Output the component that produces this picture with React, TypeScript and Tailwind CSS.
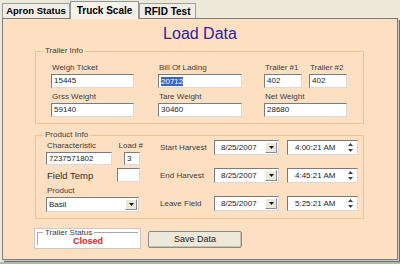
const Tab = ({ label, active, w, size }: { label: string; active?: boolean; w: string; size: string }) => (
  <div
    className={
      active
        ? `${w} ${size} h-[18px] flex items-center justify-center border border-b-0 border-[#8f9698] bg-[#f4f2ea] font-bold text-black z-10 -mb-px`
        : `${w} ${size} h-[15px] flex items-center justify-center border border-b-0 border-[#9aa0a2] bg-[#efede4] font-bold text-black`
    }
  >
    {label}
  </div>
);

const Label = ({ text, className = "" }: { text: string; className?: string }) => (
  <div className={`text-[8px] leading-[10px] text-[#3c3c3c] ${className}`}>{text}</div>
);

const Box = ({
  value,
  w,
  h = "h-[14px]",
  selected,
}: {
  value: string;
  w: string;
  h?: string;
  selected?: boolean;
}) => (
  <div
    className={`${w} ${h} bg-white border border-t-[#7b7b7b] border-l-[#7b7b7b] border-r-[#d9d9d9] border-b-[#d9d9d9] flex items-center pl-[2px] text-[8px] text-[#222]`}
  >
    {selected ? <span className="bg-[#3a66c4] text-white leading-[9px]">{value}</span> : value}
  </div>
);

const DropBtn = () => (
  <div className="w-[12px] h-[11px] mr-[1px] bg-[#ebe8dc] border border-t-white border-l-white border-r-[#8a8a8a] border-b-[#8a8a8a] flex items-center justify-center">
    <svg width="5" height="3" viewBox="0 0 5 3">
      <path d="M0 0h5L2.5 3z" fill="#111" />
    </svg>
  </div>
);

const Spin = () => (
  <div className="w-[12px] h-[13px] mr-[1px] flex flex-col justify-center items-center gap-[3px]">
    <svg width="5" height="3" viewBox="0 0 5 3">
      <path d="M0 3h5L2.5 0z" fill="#444" />
    </svg>
    <svg width="5" height="3" viewBox="0 0 5 3">
      <path d="M0 0h5L2.5 3z" fill="#444" />
    </svg>
  </div>
);

const Picker = ({ date, time }: { date: string; time: string }) => (
  <div className="flex gap-[8px]">
    <div className="w-[65px] h-[15px] bg-white border border-t-[#7b7b7b] border-l-[#7b7b7b] border-r-[#d9d9d9] border-b-[#d9d9d9] flex items-center justify-between text-[8px] text-[#222]">
      <span className="pl-[6px]">{date}</span>
      <DropBtn />
    </div>
    <div className="w-[71px] h-[15px] bg-white border border-t-[#7b7b7b] border-l-[#7b7b7b] border-r-[#d9d9d9] border-b-[#d9d9d9] flex items-center justify-between text-[8px] text-[#222]">
      <span className="pl-[7px]">{time}</span>
      <Spin />
    </div>
  </div>
);

const HarvestRow = ({ label, date, time }: { label: string; date: string; time: string }) => (
  <div className="flex items-center h-[15px]">
    <div className="w-[54px] text-[8px] text-[#3c3c3c]">{label}</div>
    <Picker date={date} time={time} />
  </div>
);

export default function App() {
  return (
    <div
      className="w-[400px] h-[264px] bg-[#ece9d8] overflow-hidden"
      style={{ fontFamily: '"Liberation Sans", Arial, sans-serif' }}
    >
      {/* Tabs */}
      <div className="h-[18px] flex items-end pl-[2px]">
        <Tab label="Apron Status" w="w-[68px]" size="text-[9.5px]" />
        <Tab label="Truck Scale" w="w-[69px]" size="text-[10px]" active />
        <Tab label="RFID Test" w="w-[57px]" size="text-[10px]" />
      </div>

      {/* Panel */}
      <div className="mx-[2px] h-[242px] bg-[#fde0c2] border border-[#7d7d7d] shadow-[1px_1px_0_#c8c8c8,2px_2px_0_#6e6e6e]">
        <div className="mt-[5px] text-center text-[16px] leading-[20px] text-[#2a22a8]">Load Data</div>

        <div className="pl-[32px]">
          {/* Trailer Info */}
          <fieldset className="mt-[2px] w-[329px] h-[78px] border border-[#efc48e]">
            <legend className="ml-[7px] px-[2px] text-[8px] leading-[10px] text-[#3c3c3c]">Trailer Info</legend>
            <div className="pl-[15px] pt-[7px] flex">
              <div className="flex flex-col gap-[1px] w-[83px]">
                <Label text="Weigh Ticket" className="ml-[1px]" />
                <Box value="15445" w="w-[83px]" />
                <Label text="Grss Weight" className="ml-[1px] mt-[3px]" />
                <Box value="59140" w="w-[83px]" />
              </div>
              <div className="flex flex-col gap-[1px] w-[84px] ml-[24px]">
                <Label text="Bill Of Lading" className="ml-[1px]" />
                <Box value="20712" w="w-[84px]" selected />
                <Label text="Tare Weight" className="ml-[1px] mt-[3px]" />
                <Box value="30460" w="w-[84px]" />
              </div>
              <div className="flex flex-col gap-[1px] ml-[22px]">
                <div className="flex gap-[7px]">
                  <div className="flex flex-col gap-[1px]">
                    <Label text="Trailer #1" className="ml-[1px]" />
                    <Box value="402" w="w-[38px]" />
                  </div>
                  <div className="flex flex-col gap-[1px]">
                    <Label text="Trailer #2" className="ml-[1px]" />
                    <Box value="402" w="w-[38px]" />
                  </div>
                </div>
                <Label text="Net Weight" className="ml-[1px] mt-[3px]" />
                <Box value="28680" w="w-[83px]" />
              </div>
            </div>
          </fieldset>

          {/* Product Info */}
          <fieldset className="mt-[6px] w-[329px] h-[89px] border border-[#efc48e]">
            <legend className="ml-[7px] px-[2px] text-[8px] leading-[10px] text-[#3c3c3c]">Product Info</legend>
            <div className="flex pl-[10px]">
              <div className="w-[94px] flex flex-col pt-[1px]">
                <div className="flex justify-between">
                  <div className="flex flex-col gap-[1px]">
                    <Label text="Characteristic" className="ml-[1px]" />
                    <Box value="7237571802" w="w-[66px]" h="h-[13px]" />
                  </div>
                  <div className="flex flex-col gap-[1px] items-end">
                    <Label text="Load #" className="mr-[-3px]" />
                    <Box value="3" w="w-[16px]" h="h-[13px]" />
                  </div>
                </div>
                <div className="flex justify-between items-center mt-[3px]">
                  <div className="text-[9.5px] leading-[13px] text-[#2c2c2c] ml-[1px] mt-[1px]">Field Temp</div>
                  <Box value="" w="w-[23px]" h="h-[14px]" />
                </div>
                <Label text="Product" className="ml-[1px] mt-[4px]" />
                <div className="mt-[1px] w-[93px] h-[15px] bg-white border border-t-[#7b7b7b] border-l-[#7b7b7b] border-r-[#d9d9d9] border-b-[#d9d9d9] flex items-center justify-between text-[8px] text-[#222]">
                  <span className="pl-[2px]">Basil</span>
                  <DropBtn />
                </div>
              </div>
              <div className="ml-[20px] flex flex-col gap-[13px]">
                <HarvestRow label="Start Harvest" date="8/25/2007" time="4:00:21 AM" />
                <HarvestRow label="End Harvest" date="8/25/2007" time="4:45:21 AM" />
                <HarvestRow label="Leave Field" date="8/25/2007" time="5:25:21 AM" />
              </div>
            </div>
          </fieldset>
        </div>

        {/* Bottom row */}
        <div className="flex items-start mt-[9px] ml-[31px]">
          <div className="w-[107px] h-[21px] bg-white border border-[#c8c8c8] px-[2px]">
            <fieldset className="h-[17px] border border-[#a8a8a8] border-b-0 border-r-0 -mt-[1px]">
              <legend className="ml-[5px] px-[2px] text-[8px] leading-[9px] text-[#3c3c3c]">Trailer Status</legend>
              <div className="text-center text-[9px] leading-[9px] font-bold text-[#e01c1c]">Closed</div>
            </fieldset>
          </div>
          <div className="ml-[7px] mt-[3px] w-[94px] h-[17px] bg-[#ece9d8] border border-[#8c8c8c] rounded-[2px] shadow-[inset_-1px_-1px_0_#c5c2b2] flex items-center justify-center text-[9px] text-[#222]">
            Save Data
          </div>
        </div>
      </div>
      <div className="mt-[2px] h-[3px] bg-[#a9bda3]" />
    </div>
  );
}
